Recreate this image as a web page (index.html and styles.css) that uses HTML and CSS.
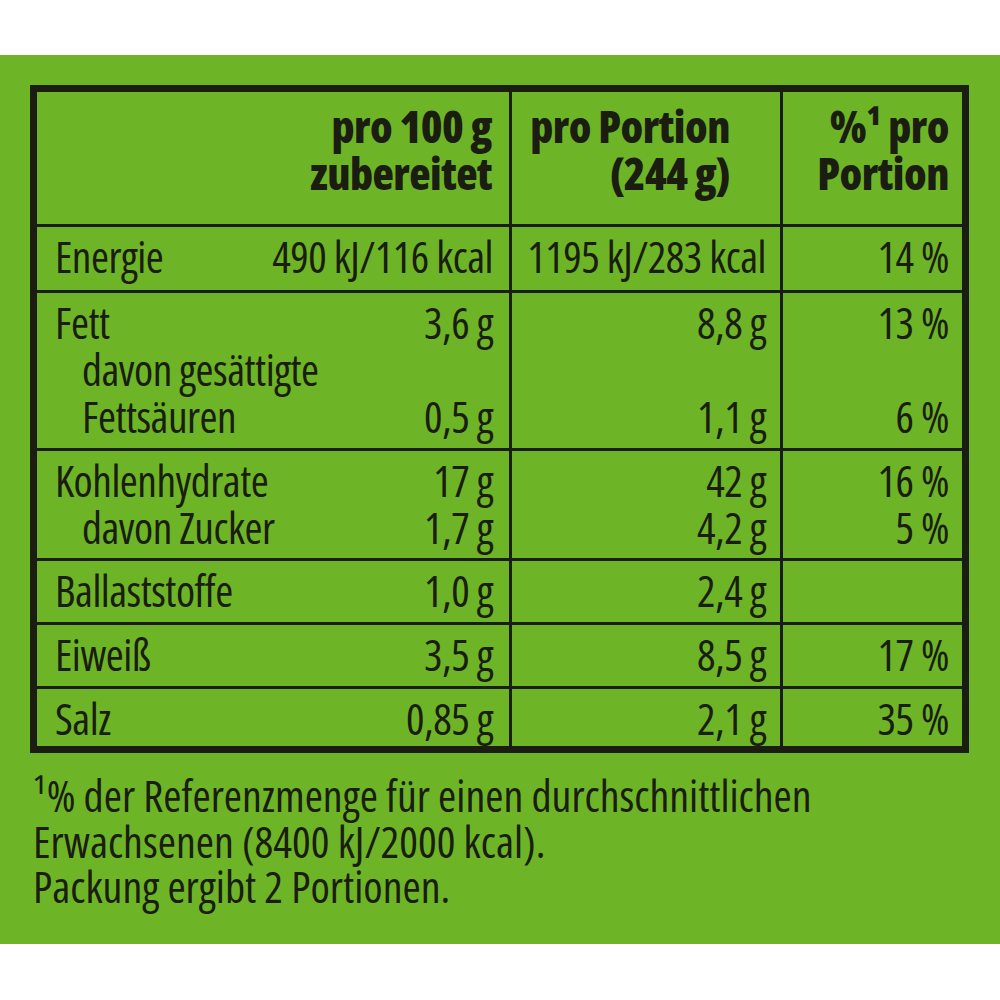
FILE: index.html
```html
<!DOCTYPE html>
<html lang="de">
<head>
<meta charset="utf-8">
<title>Nährwerte</title>
<link rel="stylesheet" href="styles.css">
</head>
<body>
<div class="panel">
  <div class="nutri">
    <div class="cell head c1">pro 100 g<br>zubereitet</div>
    <div class="cell head c2">pro Portion<br>(244 g)</div>
    <div class="cell head c3">%¹ pro<br>Portion</div>

    <div class="cell c1">
      <div class="line"><span>Energie</span><span>490 kJ/116 kcal</span></div>
    </div>
    <div class="cell num c2">1195 kJ/283 kcal</div>
    <div class="cell num c3">14 %</div>

    <div class="cell c1">
      <div class="line"><span>Fett</span><span>3,6 g</span></div>
      <div class="line sub"><span>davon gesättigte</span><span></span></div>
      <div class="line sub"><span>Fettsäuren</span><span>0,5 g</span></div>
    </div>
    <div class="cell num c2">8,8 g<br>&nbsp;<br>1,1 g</div>
    <div class="cell num c3">13 %<br>&nbsp;<br>6 %</div>

    <div class="cell c1">
      <div class="line"><span>Kohlenhydrate</span><span>17 g</span></div>
      <div class="line sub"><span>davon Zucker</span><span>1,7 g</span></div>
    </div>
    <div class="cell num c2">42 g<br>4,2 g</div>
    <div class="cell num c3">16 %<br>5 %</div>

    <div class="cell c1">
      <div class="line"><span>Ballaststoffe</span><span>1,0 g</span></div>
    </div>
    <div class="cell num c2">2,4 g</div>
    <div class="cell num c3"></div>

    <div class="cell c1">
      <div class="line"><span>Eiweiß</span><span>3,5 g</span></div>
    </div>
    <div class="cell num c2">8,5 g</div>
    <div class="cell num c3">17 %</div>

    <div class="cell c1">
      <div class="line"><span>Salz</span><span>0,85 g</span></div>
    </div>
    <div class="cell num c2">2,1 g</div>
    <div class="cell num c3">35 %</div>
  </div>
  <p class="note">¹% der Referenzmenge für einen durchschnittlichen<br>Erwachsenen (8400 kJ/2000 kcal).<br>Packung ergibt 2 Portionen.</p>
</div>
</body>
</html>
```
FILE: styles.css
```css
html, body {
  margin: 0;
  padding: 0;
  background: #ffffff;
}

body {
  font-family: "Open Sans", "Liberation Sans", sans-serif;
  font-stretch: 75%;
  font-weight: 500;
  color: #1a1d0f;
}

.panel {
  margin-top: 55px;
  height: 889px;
  box-sizing: border-box;
  background: #6db526;
  padding: 30px 31px 0 30px;
}

.nutri {
  display: grid;
  grid-template-columns: 472px 268px 179px;
  grid-template-rows: 132px 63px 155px 107px 61px 61px 57px;
  gap: 3px;
  width: max-content;
  background: #1b1d10;
  border: 7px solid #1b1d10;
}

.cell {
  background: #6db526;
  font-size: 43.5px;
  line-height: 47px;
  letter-spacing: -0.5px;
  padding-top: 6px;
  box-sizing: border-box;
  white-space: nowrap;
}

.cell.c1 {
  padding-left: 18px;
  padding-right: 16px;
}

.cell.c2 {
  padding-right: 14px;
}

.cell.c3 {
  padding-right: 13px;
}

.num {
  text-align: right;
}

.line {
  display: flex;
  justify-content: space-between;
}

.line.sub {
  padding-left: 27px;
}

.head {
  font-weight: 800;
  font-size: 44px;
  line-height: 47px;
  letter-spacing: -0.5px;
  padding-top: 11px;
  text-align: right;
}

.head.c1 {
  padding-right: 17px;
}

.head.c2 {
  padding-right: 50px;
}

.head.c3 {
  padding-right: 13px;
}

.note {
  margin: 20px 0 0 3px;
  font-size: 44px;
  line-height: 45.5px;
  letter-spacing: 0;
}
```
